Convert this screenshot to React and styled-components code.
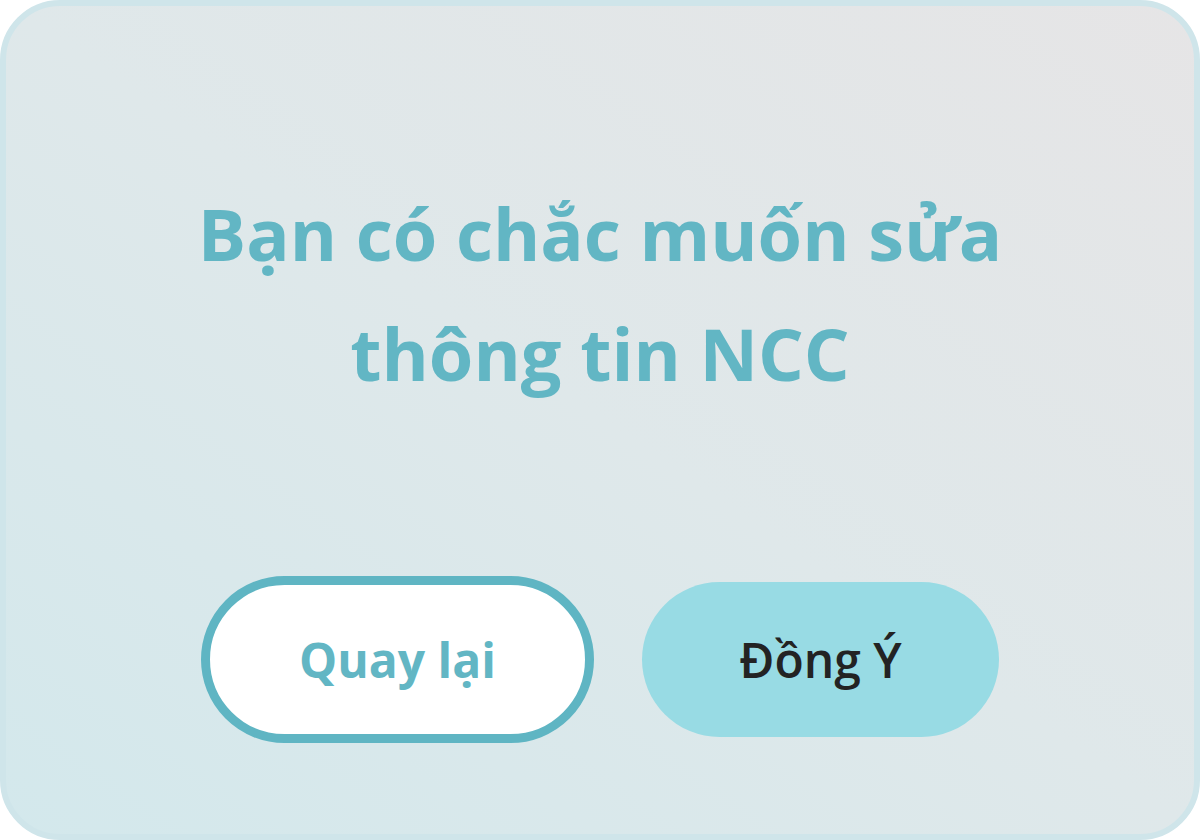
import React from "react";
import styled, { createGlobalStyle } from "styled-components";

const Global = createGlobalStyle`
  html, body { margin: 0; padding: 0; background: #ffffff; }
  body { font-family: "Open Sans", "Noto Sans", sans-serif; }
  * { box-sizing: border-box; }
`;

const Card = styled.div`
  width: 1200px;
  height: 840px;
  border: 6px solid #cfe5ea;
  border-radius: 60px;
  background: linear-gradient(to top right, #d3e8ec 0%, #dfe8ea 50%, #e6e5e6 100%);
  display: flex;
  flex-direction: column;
  align-items: center;
  padding-top: 167px;
  overflow: hidden;
`;

const Title = styled.h1`
  margin: 0;
  max-width: 900px;
  text-align: center;
  font-family: "Open Sans", sans-serif;
  font-weight: 700;
  font-size: 72px;
  line-height: 120px;
  color: #62b6c4;
`;

const ButtonRow = styled.div`
  margin-top: 163px;
  display: flex;
  align-items: center;
  gap: 48px;
`;

const Button = styled.button`
  font-family: "Open Sans", sans-serif;
  font-size: 48px;
  border-radius: 999px;
  display: flex;
  align-items: center;
  justify-content: center;
  cursor: pointer;
  padding: 0;
  width: ${(p) => (p.$outline ? "393px" : "357px")};
  height: ${(p) => (p.$outline ? "167px" : "155px")};
  background: ${(p) => (p.$outline ? "#ffffff" : "#98dbe4")};
  border: ${(p) => (p.$outline ? "9px solid #5fb5c3" : "none")};
  color: ${(p) => (p.$outline ? "#62b6c4" : "#232323")};
  font-weight: ${(p) => (p.$outline ? 700 : 600)};
`;

export default function App() {
  return (
    <>
      <Global />
      <Card>
        <Title>Bạn có chắc muốn sửa thông tin NCC</Title>
        <ButtonRow>
          <Button $outline>Quay lại</Button>
          <Button>Đồng Ý</Button>
        </ButtonRow>
      </Card>
    </>
  );
}
